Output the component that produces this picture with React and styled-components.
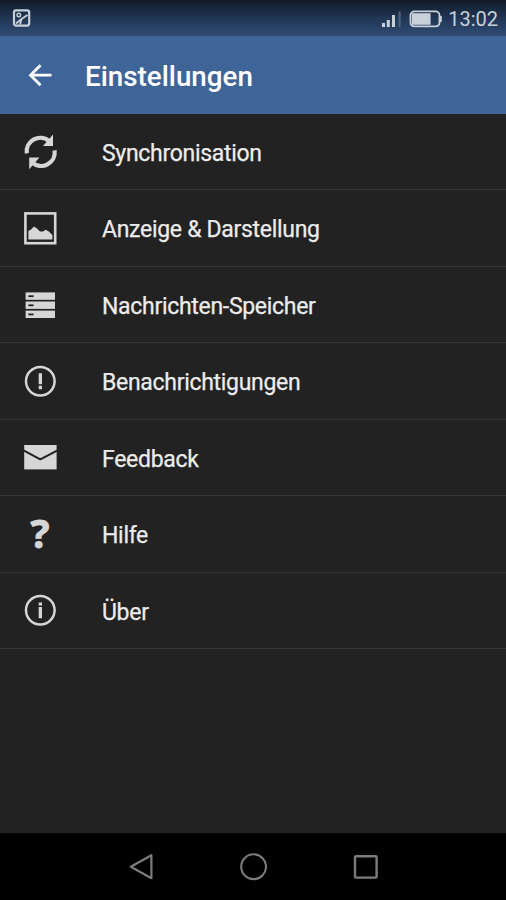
import React from 'react'
import styled, {createGlobalStyle} from 'styled-components'

const GlobalStyle = createGlobalStyle`
  body {
    margin: 0;
    background: #222222;
    font-family: Roboto, "Liberation Sans", sans-serif;
  }
`
const Screen = styled.div`
  display: flex;
  flex-direction: column;
  width: 506px;
  height: 900px;
  overflow: hidden;
  background: #222222;
`
const StatusBar = styled.div`
  display: flex;
  align-items: center;
  height: 36px;
  box-sizing: border-box;
  padding: 1px 8px 0 12px;
  background: linear-gradient(#101a29, #213653 50%, #2f4b75);
  color: #c8d0da;
`
const StatusIcons = styled.div`
  display: flex;
  align-items: center;
  margin-left: auto;
`
const Clock = styled.span`
  margin-left: 6px;
  font-size: 20px;
  line-height: 36px;
`
const Header = styled.header`
  display: flex;
  align-items: center;
  height: 78px;
  padding-left: 28px;
  background: #3f6497;
`
const Title = styled.h1`
  margin: 2px 0 0 33px;
  color: #ffffff;
  font-size: 27.8px;
  font-weight: 500;
`
const List = styled.ul`
  flex: 1;
  margin: 0;
  padding: 0;
  list-style: none;
`
const Row = styled.li`
  display: flex;
  align-items: center;
  height: 76.45px;
  box-sizing: border-box;
  padding-left: 20px;
  border-bottom: 1px solid #363636;
`
const RowIcon = styled.span`
  display: flex;
  align-items: center;
  justify-content: center;
  width: 40px;
  height: 40px;
  color: #d6d6d6;
`
const QuestionMark = styled.span`
  margin-top: -2px;
  font-family: "Open Sans", "Noto Sans", sans-serif;
  font-size: 40px;
  font-weight: 700;
  line-height: 40px;
  -webkit-text-stroke: 0.9px currentColor;
`
const Label = styled.span`
  margin: 4.6px 0 0 42px;
  color: #ececec;
  font-size: 23px;
  line-height: 28px;
  letter-spacing: -0.3px;
  white-space: nowrap;
  -webkit-text-stroke: 0.25px currentColor;
`
const NavBar = styled.nav`
  display: flex;
  align-items: center;
  justify-content: center;
  gap: 84px;
  height: 67px;
  background: #000000;
`

const Icon = ({size = 40, width, height, children}) => (
    <svg width={width || size} height={height || size} viewBox={`0 0 ${width || size} ${height || size}`} fill="none">
        {children}
    </svg>
)

const SyncIcon = () => (
    <Icon>
        <path d="M6.8 21.4A13.6 13.6 0 0 1 29.5 9.4" stroke="currentColor" strokeWidth="4.2" />
        <path d="M34.6 18.4A13.6 13.6 0 0 1 12 30.4" stroke="currentColor" strokeWidth="4.2" />
        <path d="M33 2.4V14H23zM9.2 37.2V25.6H19.4z" fill="currentColor" />
    </Icon>
)
const PictureIcon = () => (
    <Icon>
        <rect x="5.4" y="5.4" width="29.8" height="29.8" stroke="currentColor" strokeWidth="2.6" />
        <path d="M8.4 31.6V23L11 21.5L14 18.6L17 20.4L20 23.6L23 23.6L25.5 21.8L28.5 23.2L32.4 27V31.6z" fill="currentColor" />
    </Icon>
)
const StorageIcon = () => (
    <Icon>
        {[7.4, 16.5, 25.6].map(y => (
            <React.Fragment key={y}>
                <rect x="5.6" y={y} width="29.4" height="7.4" fill="currentColor" />
                <rect x="8.4" y={y + 2.9} width="5.2" height="1.8" fill="#222222" />
            </React.Fragment>
        ))}
    </Icon>
)
const AlertIcon = () => (
    <Icon>
        <circle cx="20.3" cy="20.3" r="14.3" stroke="currentColor" strokeWidth="2.5" />
        <path d="M18.7 12.3h3.3v11h-3.3zM18.7 24.7h3.3v3.6h-3.3z" fill="currentColor" />
    </Icon>
)
const MailIcon = () => (
    <Icon>
        <rect x="4.2" y="8" width="32.4" height="24.4" fill="currentColor" />
        <path d="M3 13.2L20.3 22.4L38 13.2" stroke="#222222" strokeWidth="2" />
    </Icon>
)
const InfoIcon = () => (
    <Icon>
        <circle cx="20.3" cy="20.3" r="14.3" stroke="currentColor" strokeWidth="2.5" />
        <path d="M18.7 12.5h3.3v2.9h-3.3zM18.7 17.1h3.3v11.2h-3.3z" fill="currentColor" />
    </Icon>
)

const items = [
    {label: 'Synchronisation', icon: <SyncIcon />},
    {label: 'Anzeige & Darstellung', icon: <PictureIcon />},
    {label: 'Nachrichten-Speicher', icon: <StorageIcon />},
    {label: 'Benachrichtigungen', icon: <AlertIcon />},
    {label: 'Feedback', icon: <MailIcon />},
    {label: 'Hilfe', icon: <QuestionMark>?</QuestionMark>},
    {label: 'Über', icon: <InfoIcon />},
]

const App = () => {
    return (
        <Screen>
            <GlobalStyle />
            <StatusBar>
                <Icon size={20}>
                    <rect x="2" y="1.4" width="15.2" height="15.2" rx="2" stroke="currentColor" strokeWidth="2.2" />
                    <circle cx="6.8" cy="6" r="1.8" stroke="currentColor" strokeWidth="1.4" />
                    <path d="M4 14.5L9.5 10L15.5 6M9.5 10L8 15.5" stroke="currentColor" strokeWidth="1.8" />
                </Icon>
                <StatusIcons>
                    <Icon width={22} height={20}>
                        <path d="M2 14h3v4H2zM6.8 11h3v7h-3zM12 6h3v12h-3z" fill="currentColor" />
                        <path d="M18.5 2.5h2.2V18h-2.2z" fill="#4d617e" />
                    </Icon>
                    <Icon width={40} height={20}>
                        <rect x="8.5" y="2.4" width="29" height="15" rx="4" stroke="currentColor" strokeWidth="1.9" />
                        <path d="M10 4.2h18.6v11.6H10z" fill="currentColor" />
                        <path d="M38 7h1.8v6H38z" fill="currentColor" />
                    </Icon>
                    <Clock>13:02</Clock>
                </StatusIcons>
            </StatusBar>
            <Header>
                <Icon size={24}>
                    <path d="M12.5 2.2L2.5 12.2L12.5 22.2M2.5 12.2H23.5" stroke="#ffffff" strokeWidth="2.8" />
                </Icon>
                <Title>Einstellungen</Title>
            </Header>
            <List>
                {items.map(item => (
                    <Row key={item.label}>
                        <RowIcon>{item.icon}</RowIcon>
                        <Label>{item.label}</Label>
                    </Row>
                ))}
            </List>
            <NavBar>
                <Icon size={28}>
                    <path d="M3.8 13.7L24.4 2.2V25.2z" stroke="#7c7c7c" strokeWidth="2.2" strokeLinejoin="round" />
                </Icon>
                <Icon size={28}>
                    <circle cx="14.6" cy="13.7" r="12.4" stroke="#7c7c7c" strokeWidth="2.1" />
                </Icon>
                <Icon size={28}>
                    <rect x="4" y="3.2" width="21.6" height="21.4" rx="1" stroke="#7c7c7c" strokeWidth="2.4" />
                </Icon>
            </NavBar>
        </Screen>
    )
}

export default App
